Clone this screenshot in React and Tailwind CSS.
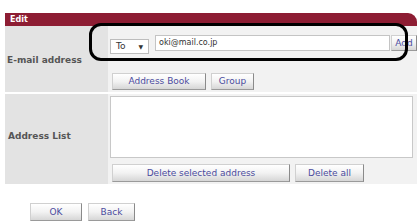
import React from 'react';

const Btn = ({ children, className = '' }) => (
  <button
    className={`flex items-center justify-center bg-gradient-to-b from-white via-[#f2f2f2] to-[#d6d6d6] border border-[#d0d0d0] border-r-[#8a8a8a] border-b-[#9a9a9a] text-[#4b4b9e] text-[9px] leading-none ${className}`}
  >
    {children}
  </button>
);

const App = () => {
  return (
    <div className="relative w-[420px] h-[223px] bg-white overflow-hidden" style={{ fontFamily: '"DejaVu Sans", Verdana, sans-serif' }}>
      <div className="pt-[13px] pl-[5px] pr-[3px]">
        {/* header */}
        <div className="h-[13px] bg-[#8d1d33] rounded-tr-[9px] flex items-center pl-[5px]">
          <span className="text-white font-bold text-[8px] leading-none">Edit</span>
        </div>

        {/* E-mail address row */}
        <div className="flex h-[68px] border-b-2 border-white">
          <div className="w-[103px] bg-[#e3e3e3] flex items-center pl-[2px] pt-[4px]">
            <span className="text-[#555] font-bold text-[9px]">E-mail address</span>
          </div>
          <div className="flex-1 bg-[#f2f2f2] pl-[2px] pt-[9px]">
            <div className="flex items-start">
              <div className="mt-[4px] w-[39px] h-[15px] bg-white border border-[#bdbdbd] flex items-center justify-between px-[5px] text-[9px] text-[#333]">
                <span>To</span>
                <span className="text-[6px]">▼</span>
              </div>
              <div className="ml-[6px] w-[235px] h-[16px] bg-white border border-[#c4c4c4] flex items-center pl-[3px] text-[8px] text-[#333]">
                oki@mail.co.jp
              </div>
              <Btn className="ml-[1px] w-[26px] h-[16px]">Add</Btn>
            </div>
            <div className="flex gap-[5px] mt-[19px] ml-[2px]">
              <Btn className="w-[94px] h-[17px]">Address Book</Btn>
              <Btn className="w-[43px] h-[17px]">Group</Btn>
            </div>
          </div>
        </div>

        {/* Address list row */}
        <div className="flex h-[90px]">
          <div className="w-[103px] bg-[#e3e3e3] flex items-center pl-[3px] pb-[4px]">
            <span className="text-[#555] font-bold text-[9px]">Address List</span>
          </div>
          <div className="flex-1 bg-[#f2f2f2] pl-[2px] pt-[2px] pr-[4px]">
            <div className="h-[62px] bg-white border border-[#c8c8c8]" />
            <div className="flex gap-[5px] mt-[6px] ml-[2px]">
              <Btn className="w-[178px] h-[18px]">Delete selected address</Btn>
              <Btn className="w-[69px] h-[18px]">Delete all</Btn>
            </div>
          </div>
        </div>
      </div>

      {/* bottom buttons */}
      <div className="flex gap-[6px] ml-[30px] mt-[19px]">
        <Btn className="w-[52px] h-[18px]">OK</Btn>
        <Btn className="w-[47px] h-[18px]">Back</Btn>
      </div>

      {/* highlight annotation */}
      <div className="absolute left-[89px] top-[23px] w-[319px] h-[38px] border-[3px] border-black rounded-[12px] pointer-events-none" />
    </div>
  );
};

export default App;
